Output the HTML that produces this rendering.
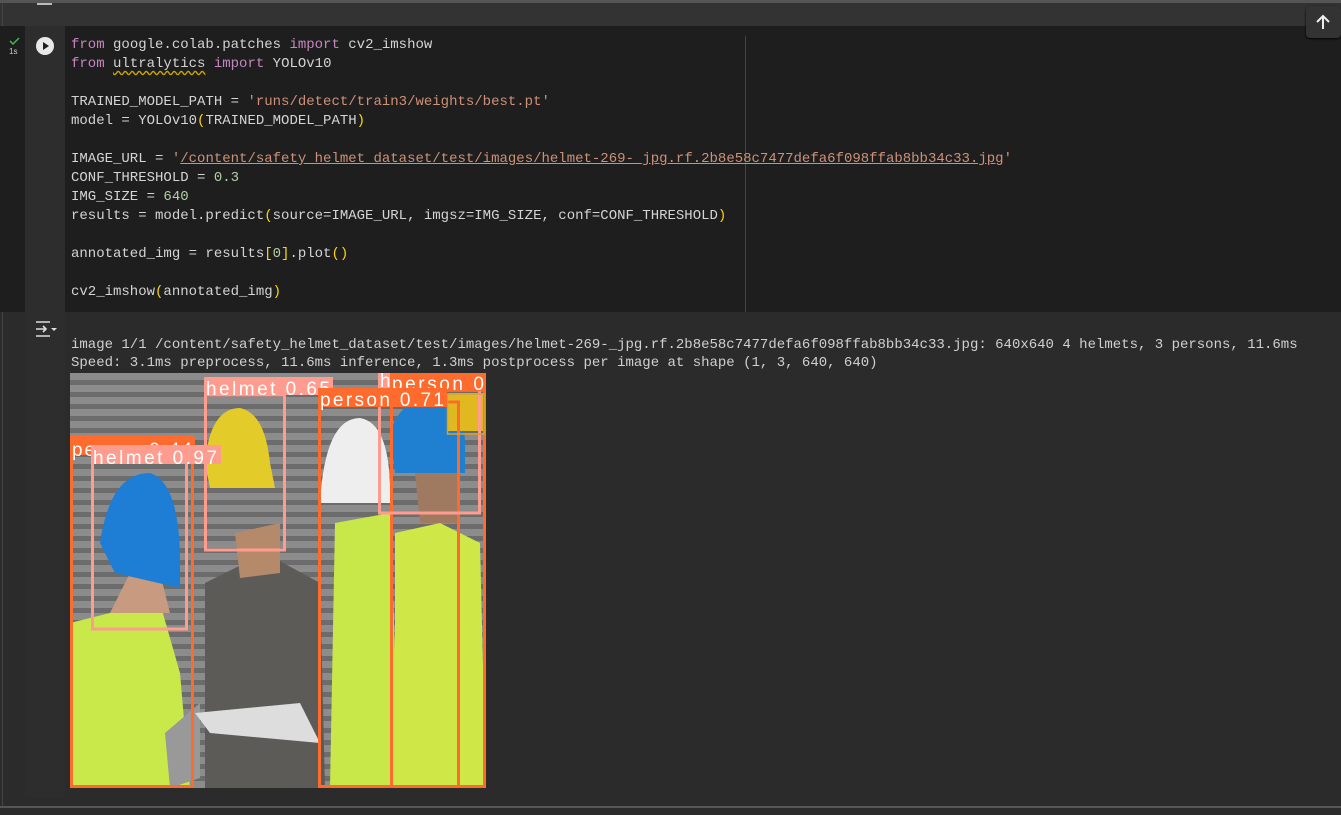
<!DOCTYPE html>
<html><head><style>
*{margin:0;padding:0;box-sizing:border-box}
body{width:1341px;height:815px;background:#2b2b2b;overflow:hidden;position:relative;font-family:"Liberation Mono",monospace}
.abs{position:absolute}
.code{position:absolute;left:71px;top:36px;font-size:14px;line-height:19px;color:#d4d4d4;white-space:pre}
.k{color:#c586c0}.s{color:#ce9178}.n{color:#b5cea8}.p{color:#ffd700}
.u{text-decoration:underline;text-decoration-color:#ce9178}
.w{text-decoration:underline wavy #c9a400;text-underline-offset:3px}
.out{position:absolute;left:71px;top:336px;font-size:14px;line-height:18px;color:#d0d0d0;white-space:pre}
</style></head><body>
<div class="abs" style="left:0;top:0;width:1341px;height:3px;background:#555"></div>
<div class="abs" style="left:0;top:3px;width:1341px;height:23px;background:#333"></div>
<div class="abs" style="left:37px;top:3px;width:15px;height:2px;background:#bbb"></div>
<div class="abs" style="left:2px;top:3px;width:1px;height:805px;background:#444"></div>
<div class="abs" style="left:0;top:26px;width:1341px;height:286px;background:#1e1e1e"></div>
<div class="abs" style="left:25px;top:26px;width:40px;height:286px;background:#2d2d2d"></div>
<div class="abs" style="left:745px;top:36px;width:1px;height:276px;background:#444"></div>
<div class="abs" style="left:1306px;top:6px;width:35px;height:32px;background:#333;border-radius:4px;box-shadow:0 1px 2px #000"></div>
<svg class="abs" style="left:1313px;top:12px" width="20" height="20" viewBox="0 0 20 20"><path d="M10 17V4M4 10l6-6 6 6" stroke="#eee" stroke-width="2" fill="none"/></svg>
<svg class="abs" style="left:8px;top:36px" width="14" height="20" viewBox="0 0 14 20"><path d="M2 5l3 3 6-6" stroke="#3fb950" stroke-width="1.5" fill="none"/><text x="1" y="18" font-size="8" fill="#ccc" font-family="Liberation Sans">1s</text></svg>
<div class="abs" style="left:36px;top:37px;width:18px;height:18px;border-radius:50%;background:#e8e8e8"></div>
<svg class="abs" style="left:36px;top:37px" width="18" height="18"><path d="M7 5l6 4-6 4z" fill="#1e1e1e"/></svg>
<div class="code"><span class="k">from</span> google.colab.patches <span class="k">import</span> cv2_imshow
<span class="k">from</span> <span class="w">ultralytics</span> <span class="k">import</span> YOLOv10

TRAINED_MODEL_PATH = <span class="s">'runs/detect/train3/weights/best.pt'</span>
model = YOLOv10<span class="p">(</span>TRAINED_MODEL_PATH<span class="p">)</span>

IMAGE_URL = <span class="s">'<span class="u">/content/safety_helmet_dataset/test/images/helmet-269-_jpg.rf.2b8e58c7477defa6f098ffab8bb34c33.jpg</span>'</span>
CONF_THRESHOLD = <span class="n">0.3</span>
IMG_SIZE = <span class="n">640</span>
results = model.predict<span class="p">(</span>source=IMAGE_URL, imgsz=IMG_SIZE, conf=CONF_THRESHOLD<span class="p">)</span>

annotated_img = results<span class="p">[</span><span class="n">0</span><span class="p">]</span>.plot<span class="p">()</span>

cv2_imshow<span class="p">(</span>annotated_img<span class="p">)</span></div>
<div class="abs" style="left:25px;top:312px;width:40px;height:485px;background:#2d2d2d"></div>
<svg class="abs" style="left:34px;top:319px" width="24" height="20" viewBox="0 0 24 20"><path d="M2 3h14M2 17h14M2 10h10M9 7l3 3-3 3" stroke="#ddd" stroke-width="1.6" fill="none"/><path d="M17 9h6l-3 3z" fill="#ddd"/></svg>
<div class="out">image 1/1 /content/safety_helmet_dataset/test/images/helmet-269-_jpg.rf.2b8e58c7477defa6f098ffab8bb34c33.jpg: 640x640 4 helmets, 3 persons, 11.6ms
Speed: 3.1ms preprocess, 11.6ms inference, 1.3ms postprocess per image at shape (1, 3, 640, 640)</div>
<svg class="abs" style="left:70px;top:373px" width="416" height="415" viewBox="0 0 416 415" font-family="Liberation Sans">
<defs><pattern id="st" width="10" height="12" patternUnits="userSpaceOnUse"><rect width="10" height="12" fill="#8c8c8c"/><rect y="7" width="10" height="5" fill="#6c6c6c"/></pattern></defs>
<rect width="416" height="415" fill="url(#st)"/>
<path d="M0 360L0 250L40 240L60 220L90 230L110 300L120 415L0 415Z" fill="#c9e84a"/>
<path d="M40 240L60 200L90 200L100 240Z" fill="#c89a80"/>
<path d="M30 170Q40 100 80 100Q110 110 110 190L110 215L45 200Z" fill="#1e7ed6"/>
<path d="M95 360L130 330L130 405L100 415Z" fill="#999"/>
<path d="M135 210L195 180L250 210L255 415L135 415Z" fill="#5c5b58"/>
<path d="M165 160L210 150L210 200L170 205Z" fill="#b58a6a"/>
<path d="M135 90Q140 35 170 35Q195 40 200 90L205 115L140 115Z" fill="#e3cb2a"/>
<path d="M125 340L230 330L250 370L140 360Z" fill="#ddd"/>
<path d="M265 150L320 140L330 415L260 415Z" fill="#c8e84a"/>
<path d="M250 130Q255 45 290 45Q320 50 320 120L320 130Z" fill="#eee"/>
<path d="M325 160L370 150L410 170L416 415L325 415Z" fill="#cfe848"/>
<path d="M320 60Q330 25 365 25Q395 35 395 70L395 100L325 100Z" fill="#1f7fd0"/>
<path d="M345 100L390 100L390 150L350 150Z" fill="#a07a60"/>
<rect x="378" y="20" width="36" height="38" fill="#e0b820"/>
<g fill="none" stroke-width="3">
<rect x="1.5" y="64" width="121" height="349.5" stroke="#ff6b2d"/>
<rect x="249.5" y="29" width="139" height="384.5" stroke="#ff6b2d"/>
<rect x="321.5" y="10" width="93" height="403.5" stroke="#ff6b2d"/>
<rect x="22.5" y="73" width="94" height="183" stroke="#ff9c90"/>
<rect x="135.5" y="22" width="79" height="155" stroke="#ff9c90"/>
<rect x="309.5" y="14" width="100" height="126" stroke="#ff9c90"/>
<rect x="377.5" y="21" width="37" height="40" stroke="#d9a030" stroke-width="1.5"/>
</g>
<rect x="0" y="64" width="125" height="18" fill="#ff6b2d"/><text x="2" y="83" font-size="19" fill="#fff" textLength="120" lengthAdjust="spacing">person 0.44</text>
<rect x="21" y="72" width="130" height="19" fill="#ff9c90"/><text x="23" y="91" font-size="19" fill="#fff" textLength="124" lengthAdjust="spacing">helmet 0.97</text>
<rect x="134" y="4" width="129" height="18" fill="#ff9c90"/><text x="136" y="22" font-size="19" fill="#fff" textLength="124" lengthAdjust="spacing">helmet 0.65</text>
<rect x="308" y="0" width="108" height="14" fill="#ff9c90"/><text x="310" y="14" font-size="19" fill="#fff">h</text>
<rect x="320" y="0" width="96" height="18" fill="#ff6b2d"/><text x="322" y="17" font-size="19" fill="#fff" textLength="92" lengthAdjust="spacing">person 0</text>
<rect x="248" y="15" width="129" height="19" fill="#ff6b2d"/><text x="250" y="33" font-size="19" fill="#fff" textLength="124" lengthAdjust="spacing">person 0.71</text>
</svg>
<div class="abs" style="left:0;top:806px;width:1341px;height:2px;background:#555"></div>
</body></html>
